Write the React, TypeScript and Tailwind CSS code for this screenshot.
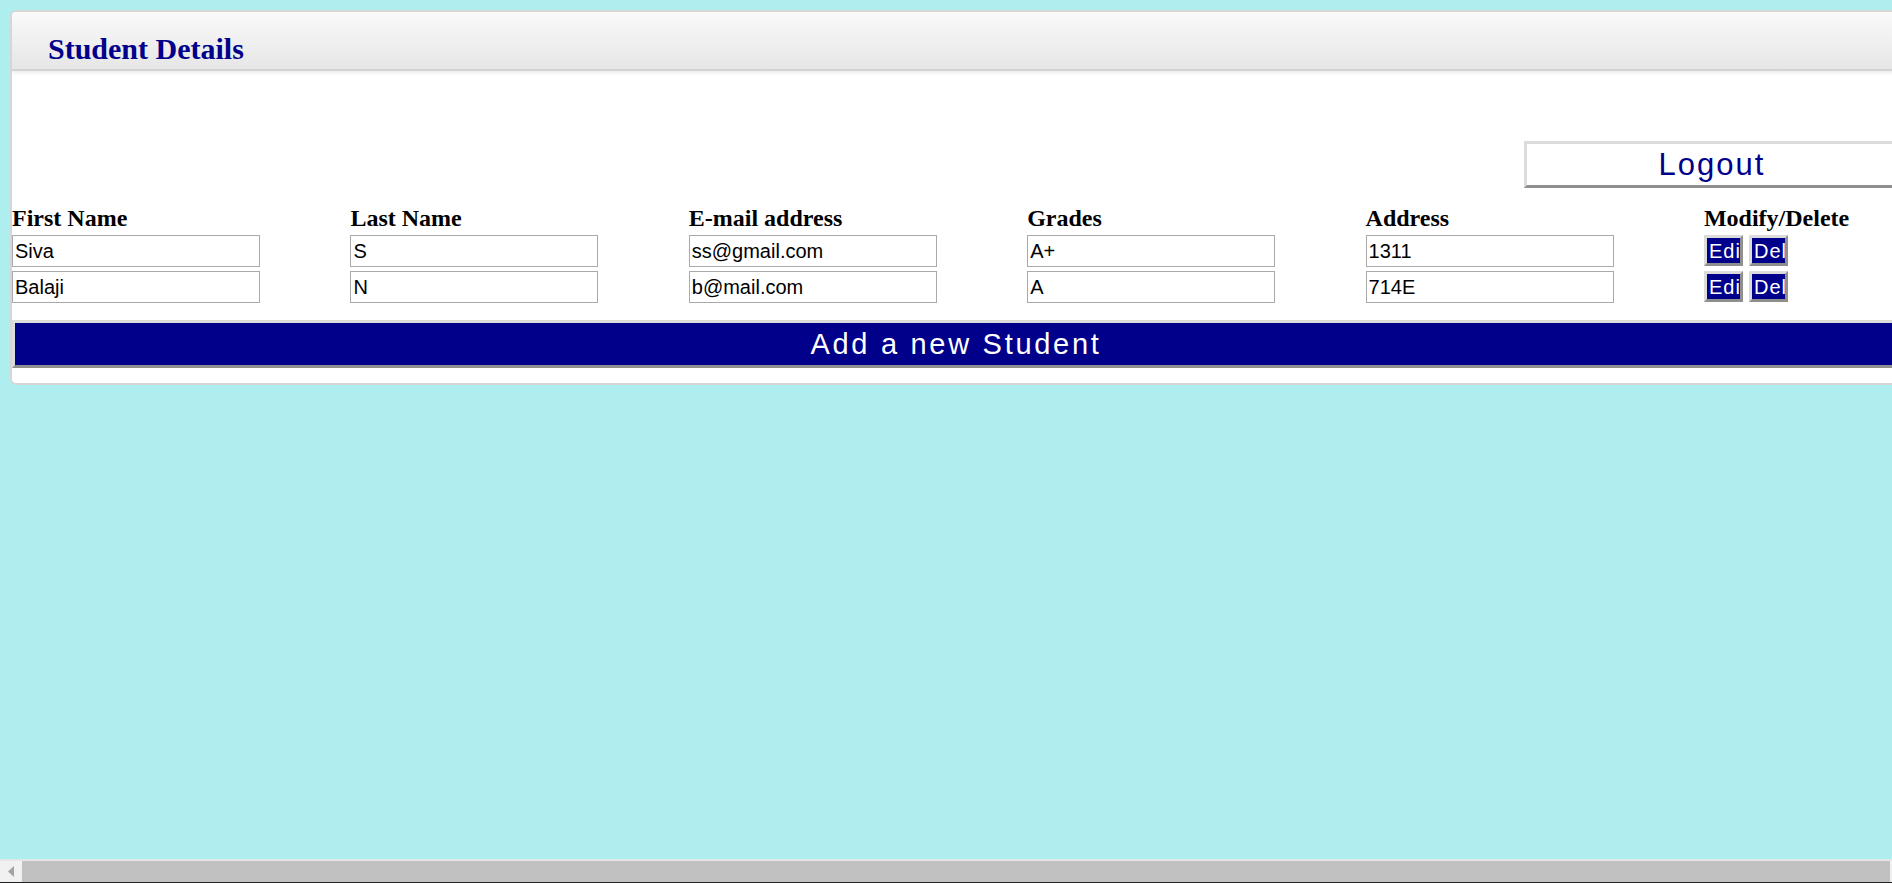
import React from 'react'

const students = [
  { first: 'Siva', last: 'S', email: 'ss@gmail.com', grade: 'A+', address: '1311' },
  { first: 'Balaji', last: 'N', email: 'b@mail.com', grade: 'A', address: '714E' },
]

const columns = ['First Name', 'Last Name', 'E-mail address', 'Grades', 'Address', 'Modify/Delete']

const serif = "font-['Liberation_Serif','Times_New_Roman',serif]"
const sans = "font-['Liberation_Sans',Arial,sans-serif]"

function Field({ value }: { value: string }) {
  return (
    <input
      defaultValue={value}
      className={`w-[248px] h-[32px] border border-[#a9a9a9] bg-white pl-[2px] text-[20px] text-black outline-none ${sans}`}
    />
  )
}

function SmallButton({ label }: { label: string }) {
  return (
    <button
      className={`w-[39px] h-[31px] shrink-0 overflow-hidden whitespace-nowrap border-[3px] border-t-[#dcdcdc] border-l-[#dcdcdc] border-b-[#8f8f8f] border-r-[#8f8f8f] bg-[#00008b] pl-[2px] text-left text-[20px] leading-none tracking-[1px] text-white ${sans}`}
    >
      {label}
    </button>
  )
}

export default function App() {
  return (
    <div className="h-[883px] w-full overflow-hidden bg-[#afeeee] flex flex-col">
      <div className="flex-1 min-h-0 overflow-hidden pt-[10px] pl-[10px]">
        <div className="w-[1892px] border-2 border-[#d6d6d6] rounded-[6px] bg-white overflow-hidden">
          {/* Header bar */}
          <div className="h-[59px] border-b-2 border-[#d2d2d2] bg-gradient-to-b from-[#fafafa] to-[#e6e6e6] pl-[36px] pt-[19px] shadow-[0_2px_3px_rgba(0,0,0,0.08)]">
            <h2 className={`text-[30px] leading-[36px] font-bold text-[#00008b] ${serif}`}>Student Details</h2>
          </div>

          <div className="pt-[70px] pb-[15px]">
            {/* Logout */}
            <div className="flex justify-end">
              <button
                className={`w-[376px] h-[47px] border-[3px] border-t-[#dcdcdc] border-l-[#dcdcdc] border-b-[#8f8f8f] border-r-[#8f8f8f] bg-white text-[31px] leading-none tracking-[2px] text-[#00008b] ${sans}`}
              >
                Logout
              </button>
            </div>

            {/* Table */}
            <div className="mt-[16px] grid grid-cols-[repeat(6,338.4px)]">
              {columns.map(c => (
                <div key={c} className={`h-[28px] text-[24px] leading-[28px] font-bold text-black whitespace-nowrap ${serif}`}>
                  {c}
                </div>
              ))}
            </div>
            <div className="mt-[3px] flex flex-col gap-[4px]">
              {students.map(s => (
                <div key={s.first} className="grid grid-cols-[repeat(6,338.4px)] h-[32px]">
                  <Field value={s.first} />
                  <Field value={s.last} />
                  <Field value={s.email} />
                  <Field value={s.grade} />
                  <Field value={s.address} />
                  <div className="flex gap-[6px] items-start">
                    <SmallButton label="Edit" />
                    <SmallButton label="Del" />
                  </div>
                </div>
              ))}
            </div>

            {/* Add button */}
            <button
              className={`mt-[17px] w-full h-[48px] border-[3px] border-t-[#dcdcdc] border-l-[#dcdcdc] border-b-[#8f8f8f] border-r-[#8f8f8f] bg-[#00008b] text-[29px] leading-none tracking-[2.7px] text-white ${sans}`}
            >
              Add a new Student
            </button>
          </div>
        </div>
      </div>

      {/* Horizontal scrollbar */}
      <div className="h-[24px] shrink-0 flex flex-col bg-[#f1f1f1] border-t-2 border-[#e6e6e6]">
        <div className="flex flex-1">
          <div className="w-[22px] flex items-center justify-center">
            <svg width="6" height="11" viewBox="0 0 6 11">
              <path d="M6 0 L0 5.5 L6 11 Z" fill="#a3a3a3" />
            </svg>
          </div>
          <div className="flex-1 bg-[#c1c1c1] mr-[2px]" />
        </div>
        <div className="h-[1px] bg-[#222]" />
      </div>
    </div>
  )
}
